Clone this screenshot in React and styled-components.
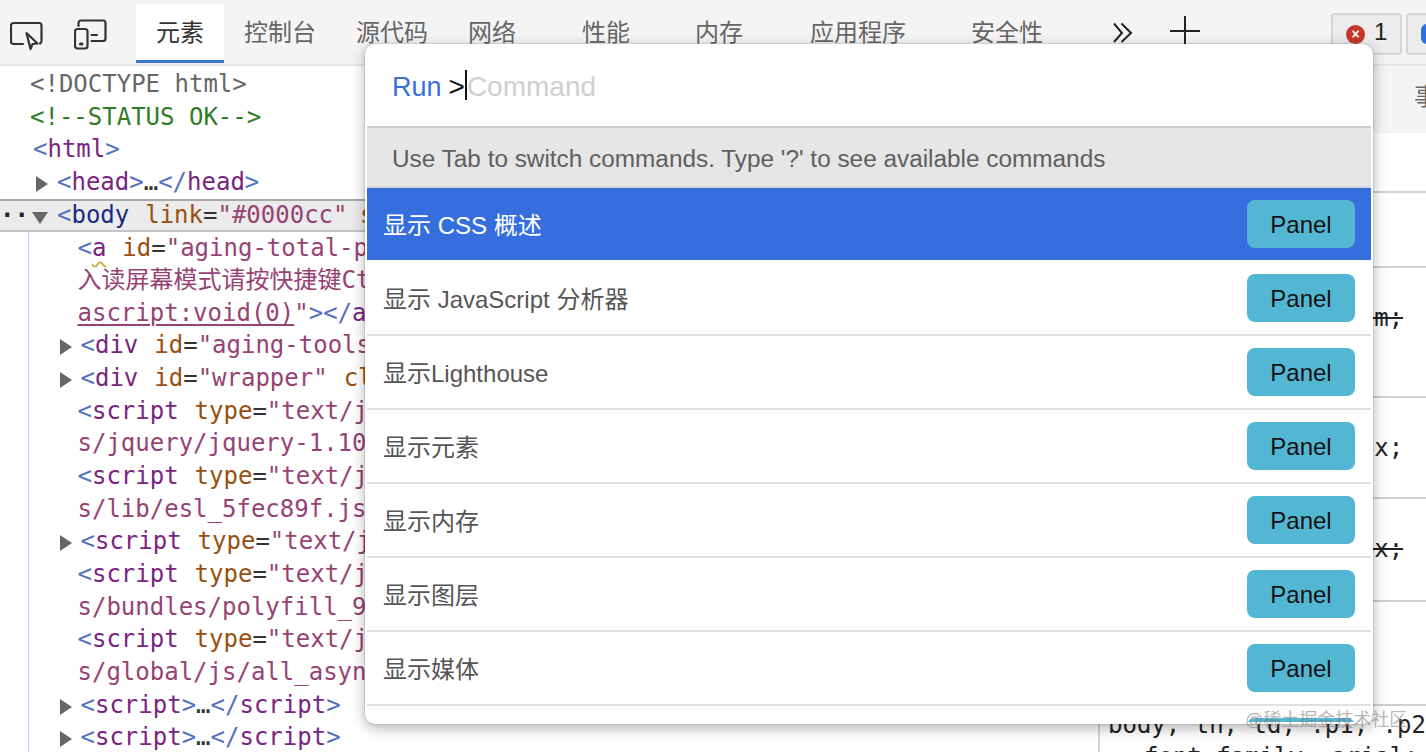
import React from "react";
import styled, { createGlobalStyle } from "styled-components";

const CJK = `"Liberation Sans", "Noto Sans CJK SC", sans-serif`;
const MONO = `"DejaVu Sans Mono", "Noto Sans CJK SC", monospace`;

const Global = createGlobalStyle`
  html, body { margin: 0; padding: 0; background: #fff; }
  body { font-family: ${CJK}; overflow: hidden; }
  #root { width: 1426px; height: 752px; }
`;

const Page = styled.div`
  position: relative;
  width: 1426px;
  height: 752px;
  overflow: hidden;
  display: flex;
  flex-direction: column;
`;

const Toolbar = styled.div`
  height: 64px;
  flex: none;
  display: flex;
  align-items: flex-start;
  background: #f4f4f4;
  border-bottom: 2px solid #e6e6e6;
  padding-left: 10px;
`;

const IconBox = styled.div`
  width: ${(p) => p.$w}px;
  height: 64px;
  flex: none;
  color: #333;
`;

const Tabs = styled.div`
  display: flex;
  margin-left: 2px;
`;

const Tab = styled.div`
  width: ${(p) => p.$w}px;
  flex: none;
  box-sizing: border-box;
  height: 59px;
  margin-top: 4px;
  padding: 13px 0 0 ${(p) => p.$pad ?? 20}px;
  font-size: 24px;
  line-height: 32px;
  white-space: nowrap;
  color: ${(p) => (p.$active ? "#333" : "#666")};
  background: ${(p) => (p.$active ? "#fff" : "transparent")};
  border-bottom: ${(p) => (p.$active ? "3px solid #3a76d6" : "3px solid transparent")};
`;

const ToolIcon = styled.div`
  flex: none;
  width: ${(p) => p.$w}px;
  height: 64px;
  color: #222;
`;

const Badge = styled.div`
  flex: none;
  box-sizing: border-box;
  height: 42px;
  width: ${(p) => p.$w}px;
  margin: 13px 0 0 ${(p) => p.$ml}px;
  background: #ececec;
  border: 2px solid #d6d6d6;
  border-radius: 4px;
  display: flex;
  align-items: center;
  gap: 9px;
  padding-left: 13px;
  font-size: 24px;
  color: #222;
`;

const ErrorDot = styled.span`
  flex: none;
  width: 19px;
  height: 19px;
  border-radius: 50%;
  background: #c5392a;
  color: #fff;
  font-size: 14px;
  line-height: 18px;
  font-weight: 700;
  text-align: center;
`;

const BadgeNum = styled.span`
  margin-top: -4px;
`;

const BlueMark = styled.span`
  width: 12px;
  height: 20px;
  flex: none;
  background: #2f6fe0;
  border-radius: 6px;
`;

const Main = styled.div`
  flex: 1;
  display: flex;
  min-height: 0;
`;

const Elements = styled.div`
  width: 1098px;
  flex: none;
  overflow: hidden;
  padding-top: 2px;
  font: 24px/32.65px ${MONO};
  color: #666;
`;

const Line = styled.div`
  height: 32.65px;
  white-space: pre;
  padding-left: ${(p) => p.$pad}px;
  box-sizing: border-box;
`;

const Nested = styled.div`
  margin-left: 28px;
  border-left: 1.5px solid #b4cdf0;
`;

const NestedLine = styled(Line)`
  padding-left: ${(p) => p.$pad - 29.5}px;
`;

const SelectedLine = styled(Line)`
  background: #ebebeb;
  border-top: 2px solid #a8a8a8;
  border-bottom: 2px solid #c4c4c4;
  height: 33px;
  line-height: 29px;
`;

const Dots = styled.span`
  display: inline-block;
  width: 32px;
  color: #222;
  font-weight: 700;
`;

const Arrow = styled.span`
  display: inline-block;
  width: 0;
  height: 0;
  margin-right: 9px;
  vertical-align: -2px;
  border-top: 8px solid transparent;
  border-bottom: 8px solid transparent;
  border-left: 12px solid #666;
`;

const ArrowDown = styled.span`
  display: inline-block;
  width: 0;
  height: 0;
  margin-right: 9px;
  vertical-align: -1px;
  border-left: 8px solid transparent;
  border-right: 8px solid transparent;
  border-top: 12px solid #666;
`;

const B = styled.span`color: #5470c4;`;
const T = styled.span`color: ${(p) => (p.$navy ? "#1c2a80" : "#7a2481")};`;
const A = styled.span`
  color: #97500f;
  margin-left: ${(p) => p.$ml ?? 1.5}px;
`;
const V = styled.span`color: #964373;`;
const Ink = styled.span`color: #333;`;
const Green = styled.span`color: #2f7d24;`;
const Under = styled.span`
  color: #964373;
  text-decoration: underline;
  text-decoration-thickness: 2px;
  text-underline-offset: 3px;
`;
const Squiggled = styled.span`
  color: #7a2481;
  text-decoration: underline wavy #c9b13c 1.5px;
  text-underline-offset: 5px;
`;

const Styles = styled.div`
  flex: 1;
  min-width: 0;
  border-left: 2px solid #d4d4d4;
  display: flex;
  flex-direction: column;
  overflow: hidden;
  font: 24px/32.65px ${MONO};
  color: #222;
`;

const StyleTabs = styled.div`
  flex: none;
  height: 67px;
  box-sizing: border-box;
  background: #f4f4f4;
  display: flex;
  padding: 15px 0 0 19px;
  font: 24px/32px ${CJK};
  color: #666;
  white-space: nowrap;
`;

const StyleTab = styled.span`
  flex: none;
  margin-left: ${(p) => p.$ml ?? 0}px;
`;

const Section = styled.div`
  flex: none;
  box-sizing: border-box;
  height: ${(p) => p.$h}px;
  border-bottom: 2px solid #cfcfcf;
  padding: ${(p) => p.$top ?? 0}px 0 0 7px;
  white-space: pre;
`;

const Rule = styled.div`
  flex: none;
  padding: 3px 0 0 8px;
  line-height: 32px;
  white-space: pre;
`;

const Decl = styled.div`
  padding-left: 36px;
  text-decoration: ${(p) => (p.$off ? "line-through" : "none")};
`;

const Modal = styled.div`
  position: absolute;
  left: 365px;
  top: 44px;
  width: 1008px;
  height: 680px;
  box-sizing: border-box;
  padding: 0 2px 2px;
  background: #fff;
  border-radius: 10px;
  box-shadow: 0 4px 14px rgba(0, 0, 0, 0.3), 0 0 2px rgba(0, 0, 0, 0.3);
  display: flex;
  flex-direction: column;
  overflow: hidden;
  font-family: ${CJK};
`;

const Prompt = styled.div`
  flex: none;
  height: 82px;
  box-sizing: border-box;
  display: flex;
  align-items: center;
  padding: 4px 0 0 25px;
  font-size: 28px;
`;

const Run = styled.span`
  color: #3a6fd8;
  font-size: 27px;
  margin-right: 7px;
`;

const Gt = styled.span`
  color: #111;
`;

const Caret = styled.span`
  width: 2px;
  height: 30px;
  margin-top: -4px;
  background: #111;
`;

const Placeholder = styled.span`
  color: #cfcfcf;
`;

const Hint = styled.div`
  flex: none;
  height: 62px;
  box-sizing: border-box;
  background: #e6e6e6;
  border-top: 2px solid #cdcdcd;
  border-bottom: 2px solid #d8d8d8;
  padding: 4px 0 0 25px;
  display: flex;
  align-items: center;
  font-size: 24.35px;
  color: #5f5f5f;
`;

const List = styled.div`
  flex: 1;
  min-height: 0;
  overflow: hidden;
`;

const Row = styled.div`
  height: 74px;
  box-sizing: border-box;
  display: flex;
  align-items: flex-start;
  justify-content: space-between;
  padding: 12px 16px 0 16px;
  background: ${(p) => (p.$on ? "#366fdd" : "#fff")};
  border-bottom: 2px solid ${(p) => (p.$on ? "#fff" : "#e0e0e0")};
  color: ${(p) => (p.$on ? "#fff" : "#555")};
  font-size: 24px;
`;

const RowLabel = styled.span`
  line-height: 51px;
  white-space: nowrap;
  font-weight: 400;
`;

const PanelTag = styled.span`
  width: 108px;
  height: 48px;
  flex: none;
  border-radius: 8px;
  background: #53b7d3;
  color: #111;
  text-align: center;
  line-height: 50px;
  font-size: 24px;
`;

const Watermark = styled.div`
  position: absolute;
  left: 1245px;
  top: 708px;
  font: 18px/24px ${CJK};
  color: rgba(120, 120, 120, 0.55);
  white-space: nowrap;
`;

const Inspect = () => (
  <svg width="40" height="64" viewBox="0 0 40 64" fill="none" stroke="currentColor" strokeWidth="2.2" strokeLinejoin="round" strokeLinecap="round">
    <path d="M13 44H3.500a2.500 2.500 0 0 1-2.500-2.500V25.500a2.500 2.500 0 0 1 2.500-2.500H29a2.500 2.500 0 0 1 2.500 2.500V41a3 3 0 0 1-1.500 2.500" />
    <path d="M16.500 33L27.500 43.500L22.500 44L20.500 49L16.500 33Z" />
  </svg>
);

const Device = () => (
  <svg width="36" height="64" viewBox="0 0 36 64" fill="none" stroke="currentColor" strokeWidth="2.2" strokeLinejoin="round" strokeLinecap="round">
    <path d="M4.500 26V23a2.500 2.500 0 0 1 2.500-2.500H29a2.500 2.500 0 0 1 2.500 2.500V38.500a2.500 2.500 0 0 1-2.500 2.500H17.500" />
    <path d="M17.500 35H23" />
    <rect x="1" y="29" width="12.500" height="19.500" rx="2.500" />
    <path d="M6.500 44H8" strokeWidth="3" />
  </svg>
);

const Chevrons = () => (
  <svg width="24" height="64" viewBox="0 0 24 64" fill="none" stroke="currentColor" strokeWidth="2">
    <path d="M3 23.500L11 33L3 42" />
    <path d="M10.500 23.500L20 33L10.500 42" />
  </svg>
);

const Plus = () => (
  <svg width="34" height="64" viewBox="0 0 34 64" fill="none" stroke="currentColor" strokeWidth="2">
    <path d="M2 31H32M17 16V46" />
  </svg>
);

const rows = [
  "显示 CSS 概述",
  "显示 JavaScript 分析器",
  "显示Lighthouse",
  "显示元素",
  "显示内存",
  "显示图层",
  "显示媒体",
  "显示动画",
];

const ScriptOpen = () => (
  <>
    <B>&lt;</B><T>script</T> <A>type</A><Ink>=</Ink><V>"text/javascript" src="https://</V>
  </>
);

const ClosedScript = () => (
  <NestedLine $pad={60}>
    <Arrow /><B>&lt;</B><T>script</T><B>&gt;</B><Ink>…</Ink><B>&lt;/</B><T>script</T><B>&gt;</B>
  </NestedLine>
);

export default function App() {
  return (
    <Page>
      <Global />
      <Toolbar>
        <IconBox $w={64}><Inspect /></IconBox>
        <IconBox $w={60}><Device /></IconBox>
        <Tabs>
          <Tab $w={88} $active>元素</Tab>
          <Tab $w={112}>控制台</Tab>
          <Tab $w={112}>源代码</Tab>
          <Tab $w={134}>网络</Tab>
          <Tab $w={113} $pad={0}>性能</Tab>
          <Tab $w={115} $pad={0}>内存</Tab>
          <Tab $w={161} $pad={0}>应用程序</Tab>
          <Tab $w={140} $pad={0}>安全性</Tab>
        </Tabs>
        <ToolIcon $w={57}><Chevrons /></ToolIcon>
        <ToolIcon $w={34}><Plus /></ToolIcon>
        <Badge $w={71} $ml={129}>
          <ErrorDot>×</ErrorDot>
          <BadgeNum>1</BadgeNum>
        </Badge>
        <Badge $w={60} $ml={4}><BlueMark /></Badge>
      </Toolbar>
      <Main>
        <Elements>
          <Line $pad={30}>&lt;!DOCTYPE html&gt;</Line>
          <Line $pad={30}><Green>&lt;!--STATUS OK--&gt;</Green></Line>
          <Line $pad={33}><B>&lt;</B><T>html</T><B>&gt;</B></Line>
          <Line $pad={36}><Arrow /><B>&lt;</B><T>head</T><B>&gt;</B><Ink>…</Ink><B>&lt;/</B><T>head</T><B>&gt;</B></Line>
          <SelectedLine $pad={0}>
            <Dots>··</Dots>
            <ArrowDown />
            <B>&lt;</B><T $navy>body</T> <A>link</A><Ink>=</Ink><V>"#0000cc"</V> <A $ml={-2}>style</A><Ink>=</Ink><V>""</V>
          </SelectedLine>
          <Nested>
            <NestedLine $pad={78}><B>&lt;</B><Squiggled>a</Squiggled> <A>id</A><Ink>=</Ink><V>"aging-total-page" role="pagedescription"</V></NestedLine>
            <NestedLine $pad={78}><V>入读屏幕模式请按快捷键Ctrl+Alt+R"</V></NestedLine>
            <NestedLine $pad={78}><Under>ascript:void(0)</Under><V>"</V><B>&gt;&lt;/</B><T>a</T><B>&gt;</B></NestedLine>
            <NestedLine $pad={60}><Arrow /><B>&lt;</B><T>div</T> <A>id</A><Ink>=</Ink><V>"aging-tools-pc"</V></NestedLine>
            <NestedLine $pad={60}><Arrow /><B>&lt;</B><T>div</T> <A>id</A><Ink>=</Ink><V>"wrapper"</V> <A>class</A><Ink>=</Ink><V>"wrapper"</V></NestedLine>
            <NestedLine $pad={78}><ScriptOpen /></NestedLine>
            <NestedLine $pad={78}><V>s/jquery/jquery-1.10.2.js"</V></NestedLine>
            <NestedLine $pad={78}><ScriptOpen /></NestedLine>
            <NestedLine $pad={78}><V>s/lib/esl_5fec89f.js"</V></NestedLine>
            <NestedLine $pad={60}><Arrow /><ScriptOpen /></NestedLine>
            <NestedLine $pad={78}><ScriptOpen /></NestedLine>
            <NestedLine $pad={78}><V>s/bundles/polyfill_9354efa.js"</V></NestedLine>
            <NestedLine $pad={78}><ScriptOpen /></NestedLine>
            <NestedLine $pad={78}><V>s/global/js/all_async_search.js"</V></NestedLine>
            <ClosedScript />
            <ClosedScript />
          </Nested>
        </Elements>
        <Styles>
          <StyleTabs>
            <StyleTab>样式</StyleTab>
            <StyleTab $ml={20}>计算样式</StyleTab>
            <StyleTab $ml={20}>布局</StyleTab>
            <StyleTab $ml={63}>事件监听器</StyleTab>
          </StyleTabs>
          <Section $h={60} />
          <Section $h={75} />
          <Section $h={130} $top={34}><Decl $off>font-size: 1.2rem;</Decl></Section>
          <Section $h={101} $top={34}><Decl>line-height: 24px;</Decl></Section>
          <Section $h={103} $top={34}><Decl $off>padding-top: 16px;</Decl></Section>
          <Section $h={104} />
          <Rule>
            body, th, td, .p1, .p2
            <Decl>font-family: arial;</Decl>
          </Rule>
        </Styles>
      </Main>
      <Modal>
        <Prompt>
          <Run>Run</Run>
          <Gt>&gt;</Gt>
          <Caret />
          <Placeholder>Command</Placeholder>
        </Prompt>
        <Hint>Use Tab to switch commands. Type '?' to see available commands</Hint>
        <List>
          {rows.map((r, i) => (
            <Row key={r} $on={i === 0}>
              <RowLabel>{r}</RowLabel>
              <PanelTag>Panel</PanelTag>
            </Row>
          ))}
        </List>
      </Modal>
      <Watermark>@稀土掘金技术社区</Watermark>
    </Page>
  );
}
